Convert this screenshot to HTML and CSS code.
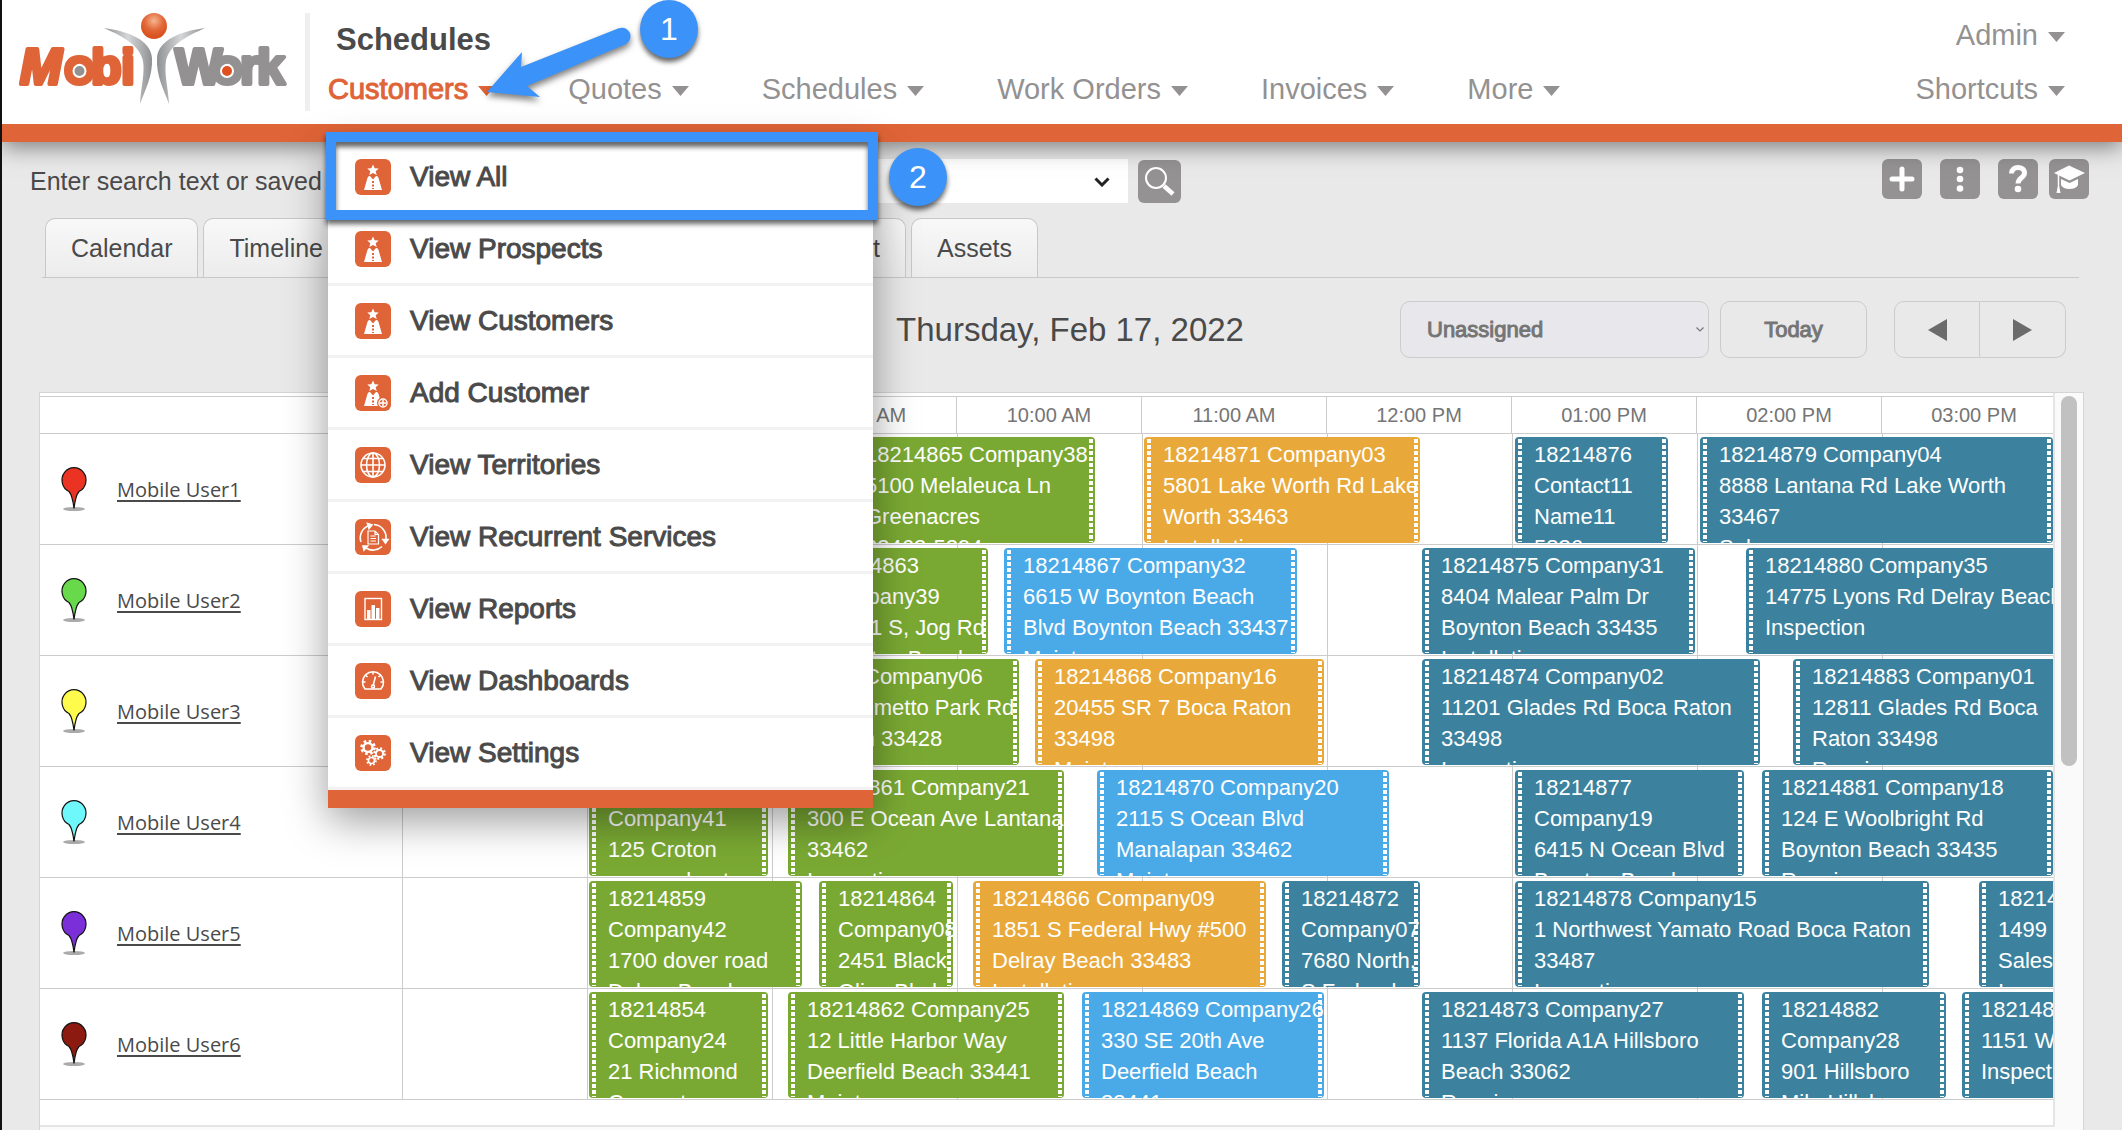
FILE: index.html
```html
<!DOCTYPE html>
<html lang="en">
<head>
  <meta charset="UTF-8" />
  <meta name="viewport" content="width=device-width, initial-scale=1.0" />
  <title>MobiWork - Schedules</title>
  <link rel="stylesheet" href="styles.css">
</head>
<body>
  <svg class="sprite" aria-hidden="true">
    <symbol id="i-person" viewBox="0 0 36 36">
      <path d="M18 5.500l1.700 3.700 4 .3-3 2.700 1 3.900L18 14l-3.700 2.100 1-3.900-3-2.700 4-.3z" fill="#fff"/>
      <path d="M9 31l3.300-11.500q.5-2.500 2-2.500h.7l3 3.500 3-3.500h.7q1.500 0 2 2.500L27 31z" fill="#fff"/>
      <path d="M18 22v8" stroke="#df6437" stroke-width="2" stroke-dasharray="2 1.500"/>
    </symbol>
    <symbol id="i-caret" viewBox="0 0 17 10"><path d="M0 0h17L8.500 10z" fill="currentColor"/></symbol>
    <symbol id="i-gear" viewBox="-10 -10 20 20">
      <circle r="5.500" fill="none" stroke="#fff" stroke-width="3"/>
      <circle r="8" fill="none" stroke="#fff" stroke-width="3.500" stroke-dasharray="3.140 3.140"/>
    </symbol>
    <symbol id="i-pin" viewBox="0 0 34 46">
      <ellipse cx="17" cy="43" rx="11" ry="2" fill="#aaa"/>
      <path d="M17 42.500C16 34 15 29 12 25.500A12 12.500 0 1 1 22 25.500C19 29 18 34 17 42.500z" fill="currentColor" stroke="#111" stroke-width="1.200"/>
    </symbol>
  </svg>

  <header class="header">
    <a class="logo" href="#" aria-label="MobiWork">
      <svg viewBox="2 0 303 124" width="303" height="124">
        <defs>
          <linearGradient id="limb" x1="0" x2="1"><stop offset="0" stop-color="#8f9092"/><stop offset=".5" stop-color="#d5d6d8"/><stop offset="1" stop-color="#8f9092"/></linearGradient>
          <radialGradient id="head" cx=".5" cy=".3" r=".6"><stop offset="0" stop-color="#f6b48e"/><stop offset=".6" stop-color="#e2683a"/><stop offset="1" stop-color="#d9531f"/></radialGradient>
        </defs>
        <text class="logo-mobi" x="20 64 91 121" y="84"><tspan font-style="italic">M</tspan>obi</text>
        <text class="logo-work" x="175 212 240 257" y="84">Work</text>
        <circle cx="79.500" cy="71" r="6" fill="#939191" stroke="#fff" stroke-width="2"/>
        <circle cx="227" cy="71" r="6" fill="#e0501f" stroke="#fff" stroke-width="2"/>
        <path d="M104 28C128 31 151 40 152 58C153 76 145 90 140 104C141 86 145 74 143 61C140 46 124 37 104 28z" fill="url(#limb)"/>
        <path d="M205 28C181 31 158 40 157 58C156 76 164 90 169 104C168 86 164 74 166 61C169 46 185 37 205 28z" fill="url(#limb)"/>
        <circle cx="154" cy="26" r="13" fill="url(#head)"/>
      </svg>
    </a>
    <div class="divider"></div>

    <div class="nav-area">
      <h1>Schedules</h1>
      <nav>
        <ul class="nav">
          <li class="active">
            <a href="#">Customers <svg class="caret"><use href="#i-caret"/></svg></a>
            <ul class="menu">
              <li><a href="#"><svg class="icon"><use href="#i-person"/></svg>View All</a></li>
              <li><a href="#"><svg class="icon"><use href="#i-person"/></svg>View Prospects</a></li>
              <li><a href="#"><svg class="icon"><use href="#i-person"/></svg>View Customers</a></li>
              <li><a href="#">
                <svg class="icon" viewBox="0 0 36 36">
                  <use href="#i-person" width="36" height="36"/>
                  <circle cx="28" cy="28" r="6" fill="#df6437"/>
                  <circle cx="28" cy="28" r="4" fill="none" stroke="#fff" stroke-width="1.500"/>
                  <path d="M28 25v6M25 28h6" stroke="#fff" stroke-width="1.500"/>
                </svg>Add Customer</a></li>
              <li><a href="#">
                <svg class="icon" viewBox="0 0 36 36" fill="none" stroke="#fff" stroke-width="1.600">
                  <circle cx="18" cy="18" r="12"/>
                  <ellipse cx="18" cy="18" rx="6.500" ry="12"/>
                  <path d="M18 6v24M6 18h24M8 11.500h20M8 24.500h20"/>
                </svg>View Territories</a></li>
              <li><a href="#">
                <svg class="icon" viewBox="0 0 36 36" fill="none" stroke="#fff" stroke-width="1.600">
                  <path d="M6 23A13 13 0 0 1 14 6.500M19 5.500A13 13 0 0 1 31 20M27 27.500A13 13 0 0 1 11 29"/>
                  <path d="M12.500 4.500l4.500 1.500-3 3.500zM28 20.500h5l-2.500 3.500zM8 27l4.500 0-3.500 4z" fill="#fff"/>
                  <path d="M13 12h7l3.500 3.500V25H13zM20 12v3.500h3.500M15.500 17h5M15.500 19.500h5.500M15.500 22h5.500" stroke-width="1.200"/>
                </svg>View Recurrent Services</a></li>
              <li><a href="#">
                <svg class="icon" viewBox="0 0 36 36" fill="#fff">
                  <rect x="10" y="7.500" width="16.500" height="21" fill="none" stroke="#fff" stroke-width="1.400"/>
                  <path d="M12 19h3.500v9H12zM16.500 14H20v14h-3.500zM21 17h3.500v11H21z"/>
                </svg>View Reports</a></li>
              <li><a href="#">
                <svg class="icon" viewBox="0 0 36 36" fill="none" stroke="#fff" stroke-width="1.600">
                  <path d="M10 26A10.500 10.500 0 1 1 26 26z" stroke-linejoin="round"/>
                  <path d="M18 9v2.500M8 19h2.500M25.500 19H28M11 12.500l1.500 1.500M25 12.500l-1.500 1.500M18 23l2.500-9.500"/>
                  <circle cx="18" cy="23.500" r="1.500"/>
                </svg>View Dashboards</a></li>
              <li><a href="#">
                <svg class="icon" viewBox="0 0 36 36">
                  <use href="#i-gear" x="5" y="4.500" width="16" height="16"/>
                  <use href="#i-gear" x="18" y="12" width="13" height="13"/>
                  <use href="#i-gear" x="11" y="20" width="11" height="11"/>
                </svg>View Settings</a></li>
            </ul>
            <div class="highlight"></div>
            <span class="step step-two">2</span>
          </li>
          <li><a href="#">Quotes <svg class="caret"><use href="#i-caret"/></svg></a></li>
          <li><a href="#">Schedules <svg class="caret"><use href="#i-caret"/></svg></a></li>
          <li><a href="#">Work Orders <svg class="caret"><use href="#i-caret"/></svg></a></li>
          <li><a href="#">Invoices <svg class="caret"><use href="#i-caret"/></svg></a></li>
          <li><a href="#">More <svg class="caret"><use href="#i-caret"/></svg></a></li>
        </ul>
      </nav>
    </div>

    <div class="account">
      <a href="#">Admin <svg class="caret"><use href="#i-caret"/></svg></a>
      <a href="#">Shortcuts <svg class="caret"><use href="#i-caret"/></svg></a>
    </div>

    <svg class="arrow" viewBox="480 20 160 90" width="160" height="90">
      <path d="M487 92L522 52L521 67L618 28.500Q626 26 630 33Q632 40 626 44L527 86L540 97z" fill="#3b92f8"/>
    </svg>
    <span class="step step-one">1</span>
  </header>

  <main>
    <div class="search-row">
      <form class="search">
        <label for="search">Enter search text or saved search:</label>
        <div class="search-select">
          <select id="search"><option></option></select>
          <svg viewBox="0 0 16 10" width="16" height="10"><path d="M1.500 1.500L8 8l6.500-6.500" fill="none" stroke="#222" stroke-width="3"/></svg>
        </div>
        <button type="button" class="tool search-btn" aria-label="Search">
          <svg viewBox="0 0 43 43"><circle cx="18" cy="18" r="10" fill="none" stroke="#fff" stroke-width="2"/><path d="M26 26l9 8" stroke="#fff" stroke-width="4.500"/></svg>
        </button>
      </form>
      <div class="tools">
        <button type="button" class="tool" aria-label="Add"><svg viewBox="0 0 40 40"><path d="M20 10v20M10 20h20" stroke="#fff" stroke-width="5" stroke-linecap="round"/></svg></button>
        <button type="button" class="tool" aria-label="More options"><svg viewBox="0 0 40 40" fill="#fff"><circle cx="20" cy="11" r="3.300"/><circle cx="20" cy="20" r="3.300"/><circle cx="20" cy="29.500" r="3.300"/></svg></button>
        <button type="button" class="tool" aria-label="Help"><svg viewBox="0 0 40 40"><path d="M13.500 14.500C13.500 6.500 26.500 6.500 26.500 14C26.500 19 20 18.500 20 24.500" fill="none" stroke="#fff" stroke-width="5"/><circle cx="20" cy="30" r="3.300" fill="#fff"/></svg></button>
        <button type="button" class="tool tool-last" aria-label="Training"><svg viewBox="0 0 40 40" fill="#fff"><path d="M20 6.500L36 14l-15.500 7.500L5 14z"/><path d="M12 20l8.500 4 8.500-4v6q-2 4-8.500 4T12 26z"/><path d="M9.500 16v10" stroke="#fff" stroke-width="1.500"/><path d="M9.500 23l2 11h-4z"/></svg></button>
      </div>
    </div>

    <div class="tabs">
      <a class="tab" href="#">Calendar</a>
      <a class="tab" href="#">Timeline</a>
      <a class="tab tab-wide" href="#">Equipment</a>
      <a class="tab" href="#">Assets</a>
    </div>

    <div class="toolbar">
      <h2>Thursday, Feb 17, 2022</h2>
      <div class="controls">
        <div class="filter">
          <select aria-label="Assignment"><option>Unassigned</option></select>
          <svg viewBox="0 0 8 5" width="8" height="5"><path d="M.5.500L4 4 7.500.500" fill="none" stroke="#777" stroke-width="1.200"/></svg>
        </div>
        <button type="button" class="btn today">Today</button>
        <div class="pager">
          <button type="button" class="btn" aria-label="Previous day"><svg viewBox="0 0 19 22" width="19" height="22"><path d="M19 0v22L0 11z" fill="#6b6b6b"/></svg></button>
          <button type="button" class="btn" aria-label="Next day"><svg viewBox="0 0 19 22" width="19" height="22"><path d="M0 0v22l19-11z" fill="#6b6b6b"/></svg></button>
        </div>
      </div>
    </div>

    <section class="scheduler">
      <div class="board">
        <div class="hours">
          <div class="corner"></div>
          <div class="hour">07:00 AM</div>
          <div class="hour">08:00 AM</div>
          <div class="hour">09:00 AM</div>
          <div class="hour">10:00 AM</div>
          <div class="hour">11:00 AM</div>
          <div class="hour">12:00 PM</div>
          <div class="hour">01:00 PM</div>
          <div class="hour">02:00 PM</div>
          <div class="hour">03:00 PM</div>
        </div>

        <div class="row">
          <div class="user"><svg class="pin red"><use href="#i-pin"/></svg><a href="#">Mobile User1</a></div>
          <div class="lane">
            <div class="job done" style="left:443px;width:249px">18214865 Company38<br>5100 Melaleuca Ln<br>Greenacres<br>33463-5294</div>
            <div class="job waiting" style="left:741px;width:276px">18214871 Company03<br>5801 Lake Worth Rd Lake<br>Worth 33463<br>Installation</div>
            <div class="job planned" style="left:1112px;width:153px">18214876<br>Contact11<br>Name11<br>5836</div>
            <div class="job planned" style="left:1297px;width:353px">18214879 Company04<br>8888 Lantana Rd Lake Worth<br>33467<br>Sales</div>
          </div>
        </div>

        <div class="row">
          <div class="user"><svg class="pin green"><use href="#i-pin"/></svg><a href="#">Mobile User2</a></div>
          <div class="lane">
            <div class="job done" style="left:399px;width:186px">18214863<br>Company39<br>15421 S, Jog Rd<br>Boynton Beach</div>
            <div class="job active-job" style="left:601px;width:293px">18214867 Company32<br>6615 W Boynton Beach<br>Blvd Boynton Beach 33437<br>Maintenance</div>
            <div class="job planned" style="left:1019px;width:273px">18214875 Company31<br>8404 Malear Palm Dr<br>Boynton Beach 33435<br>Installation</div>
            <div class="job planned" style="left:1343px;width:370px">18214880 Company35<br>14775 Lyons Rd Delray Beach<br>Inspection</div>
          </div>
        </div>

        <div class="row">
          <div class="user"><svg class="pin yellow"><use href="#i-pin"/></svg><a href="#">Mobile User3</a></div>
          <div class="lane">
            <div class="job done" style="left:338px;width:278px">18214860 Company06<br>9704 W Palmetto Park Rd<br>Boca Raton 33428</div>
            <div class="job waiting" style="left:632px;width:289px">18214868 Company16<br>20455 SR 7 Boca Raton<br>33498<br>Maintenance</div>
            <div class="job planned" style="left:1019px;width:338px">18214874 Company02<br>11201 Glades Rd Boca Raton<br>33498<br>Inspection</div>
            <div class="job planned" style="left:1390px;width:370px">18214883 Company01<br>12811 Glades Rd Boca<br>Raton 33498<br>Repair</div>
          </div>
        </div>

        <div class="row">
          <div class="user"><svg class="pin cyan"><use href="#i-pin"/></svg><a href="#">Mobile User4</a></div>
          <div class="lane">
            <div class="job done" style="left:186px;width:179px">18214855<br>Company41<br>125 Croton<br>avenue boat</div>
            <div class="job done" style="left:385px;width:276px">18214861 Company21<br>300 E Ocean Ave Lantana<br>33462<br>Inspection</div>
            <div class="job active-job" style="left:694px;width:292px">18214870 Company20<br>2115 S Ocean Blvd<br>Manalapan 33462<br>Maintenance</div>
            <div class="job planned" style="left:1112px;width:229px">18214877<br>Company19<br>6415 N Ocean Blvd<br>Boynton Beach</div>
            <div class="job planned" style="left:1359px;width:291px">18214881 Company18<br>124 E Woolbright Rd<br>Boynton Beach 33435<br>Repair</div>
          </div>
        </div>

        <div class="row">
          <div class="user"><svg class="pin purple"><use href="#i-pin"/></svg><a href="#">Mobile User5</a></div>
          <div class="lane">
            <div class="job done" style="left:186px;width:213px">18214859<br>Company42<br>1700 dover road<br>Delray Beach</div>
            <div class="job done" style="left:416px;width:134px">18214864<br>Company08<br>2451 Black<br>Olive Blvd</div>
            <div class="job waiting" style="left:570px;width:293px">18214866 Company09<br>1851 S Federal Hwy #500<br>Delray Beach 33483<br>Installation</div>
            <div class="job planned" style="left:879px;width:138px">18214872<br>Company07<br>7680 North,<br>S Federal</div>
            <div class="job planned" style="left:1112px;width:414px">18214878 Company15<br>1 Northwest Yamato Road Boca Raton<br>33487<br>Inspection</div>
            <div class="job planned" style="left:1576px;width:185px">18214884<br>1499 Yamato Rd<br>Sales<br>Inspection</div>
          </div>
        </div>

        <div class="row">
          <div class="user"><svg class="pin maroon"><use href="#i-pin"/></svg><a href="#">Mobile User6</a></div>
          <div class="lane">
            <div class="job done" style="left:186px;width:179px">18214854<br>Company24<br>21 Richmond<br>Carpenter</div>
            <div class="job done" style="left:385px;width:276px">18214862 Company25<br>12 Little Harbor Way<br>Deerfield Beach 33441<br>Maintenance</div>
            <div class="job active-job" style="left:679px;width:242px">18214869 Company26<br>330 SE 20th Ave<br>Deerfield Beach<br>33441</div>
            <div class="job planned" style="left:1019px;width:322px">18214873 Company27<br>1137 Florida A1A Hillsboro<br>Beach 33062<br>Repair</div>
            <div class="job planned" style="left:1359px;width:184px">18214882<br>Company28<br>901 Hillsboro<br>Mile Hillsboro</div>
            <div class="job planned" style="left:1559px;width:185px">18214885<br>1151 W Camino<br>Inspection</div>
          </div>
        </div>
      </div>
      <div class="scroll-track"><div class="scroll-thumb"></div></div>
    </section>
  </main>
</body>
</html>
```
FILE: styles.css
```css
* {
  box-sizing: border-box;
}

body {
  margin: 0;
  height: 100vh;
  overflow: hidden;
  border-left: 2px solid #111;
  background: #e9e9e9;
  color: #4a4a4a;
  font-family: "Liberation Sans", Arial, Helvetica, sans-serif;
  font-size: 25px;
}

a {
  color: inherit;
  text-decoration: none;
}

ul {
  list-style: none;
  margin: 0;
  padding: 0;
}

button,
select {
  font: inherit;
  color: inherit;
  margin: 0;
  padding: 0;
  border: 0;
}

.sprite {
  position: absolute;
  width: 0;
  height: 0;
}

/* header */

.header {
  position: relative;
  z-index: 10;
  display: flex;
  align-items: flex-start;
  height: 142px;
  background: #fff;
  border-bottom: 18px solid #df6437;
  box-shadow: 0 4px 22px rgba(0, 0, 0, 0.5);
  color: #939191;
  font-size: 29px;
  line-height: 34px;
}

.logo svg {
  display: block;
}

.logo-mobi,
.logo-work {
  font-weight: bold;
  font-size: 50px;
  stroke-width: 4;
  stroke-linejoin: round;
}

.logo-mobi {
  fill: #df6437;
  stroke: #df6437;
}

.logo-work {
  fill: #939191;
  stroke: #939191;
}

.divider {
  width: 5px;
  height: 98px;
  margin-top: 13px;
  background: #efefef;
}

.nav-area {
  padding: 22px 0 0 18px;
}

h1 {
  margin: 0 0 14px 8px;
  color: #4a4a4a;
  font-size: 31px;
  line-height: 36px;
}

.nav {
  display: flex;
  gap: 73px;
}

.nav > li {
  position: relative;
}

.nav > li > a,
.account a {
  display: flex;
  align-items: center;
  gap: 10px;
}

.caret {
  width: 17px;
  height: 10px;
  margin-top: 4px;
}

.active > a {
  color: #df6437;
  -webkit-text-stroke: 1px #df6437;
}

.account {
  display: flex;
  flex-direction: column;
  align-items: flex-end;
  gap: 20px;
  margin-left: auto;
  padding: 18px 57px 0 0;
}

.menu {
  position: absolute;
  top: 70px;
  left: 0;
  width: 545px;
  background: #fff;
  border-bottom: 18px solid #df6437;
  box-shadow: 0 12px 40px rgba(0, 0, 0, 0.4);
  color: #4a4a4a;
  font-size: 28px;
  -webkit-text-stroke: 1px #4a4a4a;
}

.menu a {
  display: flex;
  align-items: center;
  gap: 19px;
  height: 72px;
  padding-left: 27px;
  border-bottom: 3px solid #f2f2f2;
}

.icon {
  width: 36px;
  height: 36px;
  border-radius: 6px;
  background: #df6437;
}

/* walkthrough markers */

.highlight {
  position: absolute;
  top: 60px;
  left: -2px;
  width: 552px;
  height: 88px;
  border: 10px solid #3b92f8;
  box-shadow: 0 4px 5px rgba(0, 0, 0, 0.6), inset 0 5px 5px rgba(0, 0, 0, 0.6);
}

.step {
  position: absolute;
  width: 58px;
  height: 58px;
  border-radius: 50%;
  background: #3b92f8;
  box-shadow: 0 4px 5px rgba(0, 0, 0, 0.6);
  color: #fff;
  font-size: 32px;
  line-height: 58px;
  text-align: center;
}

.step-one {
  top: 0;
  left: 638px;
}

.step-two {
  top: 76px;
  left: 561px;
}

.arrow {
  position: absolute;
  top: 20px;
  left: 478px;
  filter: drop-shadow(0 4px 3px rgba(0, 0, 0, 0.5));
}

/* search */

.search-row {
  display: flex;
  justify-content: space-between;
  align-items: flex-start;
  padding: 17px 33px 0 28px;
}

.search {
  display: flex;
  align-items: center;
  width: 1151px;
  height: 44px;
}

.search-select {
  position: relative;
  flex: 1;
  margin: 0 10px 0 12px;
}

.search-select select {
  display: block;
  width: 100%;
  height: 44px;
  appearance: none;
  background: #fff;
}

.search-select svg {
  position: absolute;
  top: 18px;
  right: 18px;
}

.tools {
  display: flex;
  gap: 18px;
}

.tool {
  width: 40px;
  height: 40px;
  border-radius: 6px;
  background: #949292;
}

.tool svg {
  display: block;
}

.search-btn {
  width: 43px;
  height: 43px;
}

.tool-last {
  margin-left: -7px;
}

/* tabs */

.tabs {
  display: flex;
  gap: 5px;
  margin: 15px 43px 0 40px;
  padding-left: 3px;
  border-bottom: 1px solid #c8c8c8;
}

.tab {
  height: 59px;
  padding: 0 25px;
  border: 1px solid #c8c8c8;
  border-bottom: 0;
  border-radius: 10px 10px 0 0;
  background: linear-gradient(#f8f8f8, #ececec);
  line-height: 58px;
}

.tab-wide {
  width: 552px;
  text-align: right;
}

/* toolbar */

.toolbar {
  display: grid;
  grid-template-columns: 1fr auto 1fr;
  align-items: center;
  padding: 23px 56px 34px 72px;
}

h2 {
  grid-column: 2;
  margin: 0;
  font-size: 33px;
  font-weight: normal;
  line-height: 36px;
}

.controls {
  display: flex;
  justify-content: flex-end;
  color: #757575;
  font-size: 22px;
}

.filter {
  position: relative;
  width: 309px;
  margin-right: 11px;
}

.filter select {
  width: 100%;
  height: 57px;
  padding-left: 26px;
  appearance: none;
  border: 1px solid #ccc;
  border-radius: 10px;
  background: #e8e8ec;
  -webkit-text-stroke: 1px #757575;
}

.filter svg {
  position: absolute;
  top: 26px;
  right: 5px;
}

.btn {
  height: 57px;
  border: 1px solid #ccc;
  border-radius: 10px;
  background: none;
  -webkit-text-stroke: 1px #757575;
}

.today {
  width: 147px;
  margin-right: 27px;
}

.pager {
  display: flex;
}

.pager .btn {
  display: flex;
  align-items: center;
  justify-content: center;
  width: 86px;
}

.pager .btn:first-child {
  border-radius: 10px 0 0 10px;
}

.pager .btn:last-child {
  border-left: 0;
  border-radius: 0 10px 10px 0;
}

/* schedule board */

.scheduler {
  display: flex;
  margin: 0 38px 0 37px;
  padding-bottom: 20px;
  border: 1px solid #d5d5d5;
  background: #fafafa;
}

.board {
  flex: 1;
  min-width: 0;
  overflow: hidden;
  padding: 3px 0 25px;
  border-right: 2px solid #e5e5e5;
  border-bottom: 2px solid #e5e5e5;
  background: #fff;
}

.hours {
  display: flex;
  height: 38px;
  border-top: 1px solid #ccc;
  border-bottom: 1px solid #ccc;
}

.corner {
  flex: none;
  width: 362px;
  border-right: 1px solid #ccc;
}

.hour {
  flex: none;
  width: 185px;
  border-right: 1px solid #ccc;
  color: #757575;
  font-size: 20px;
  line-height: 36px;
  text-align: center;
}

.row {
  display: flex;
  height: 111px;
  border-bottom: 1px solid #ccc;
}

.user {
  display: flex;
  flex: none;
  align-items: center;
  gap: 26px;
  width: 363px;
  padding-left: 17px;
  border-right: 1px solid #ccc;
  font-family: "Open Sans", Tahoma, sans-serif;
  font-size: 20px;
}

.user a {
  text-decoration: underline;
  text-underline-offset: 3px;
}

.pin {
  width: 34px;
  height: 46px;
}

.red { color: #ea3323; }
.green { color: #67d94b; }
.yellow { color: #fffb4d; }
.cyan { color: #6ff8fb; }
.purple { color: #7a2fd8; }
.maroon { color: #8c1a10; }

.lane {
  position: relative;
  flex: 1;
  min-width: 0;
  overflow: hidden;
  background: repeating-linear-gradient(to right, transparent 0 184px, #ccc 184px 185px);
}

.job {
  position: absolute;
  top: 3px;
  height: 106px;
  padding: 2px 0 0 19px;
  overflow: hidden;
  border-radius: 4px;
  color: #fff;
  font-size: 22px;
  line-height: 31px;
  white-space: nowrap;
}

/* dotted drag handles */
.job::before,
.job::after {
  content: "";
  position: absolute;
  top: 2px;
  bottom: 1px;
  width: 4px;
  background: repeating-linear-gradient(#fff 0 4px, transparent 4px 6px);
}

.job::before { left: 3px; }
.job::after { right: 2px; }

.done { background: #7aa933; }
.waiting { background: #e9a93a; }
.active-job { background: #4aaae8; }
.planned { background: #3c829e; }

.scroll-track {
  width: 28px;
  padding: 3px 0 0 6px;
}

.scroll-thumb {
  width: 16px;
  height: 370px;
  border-radius: 8px;
  background: #c1c1c1;
}
```
